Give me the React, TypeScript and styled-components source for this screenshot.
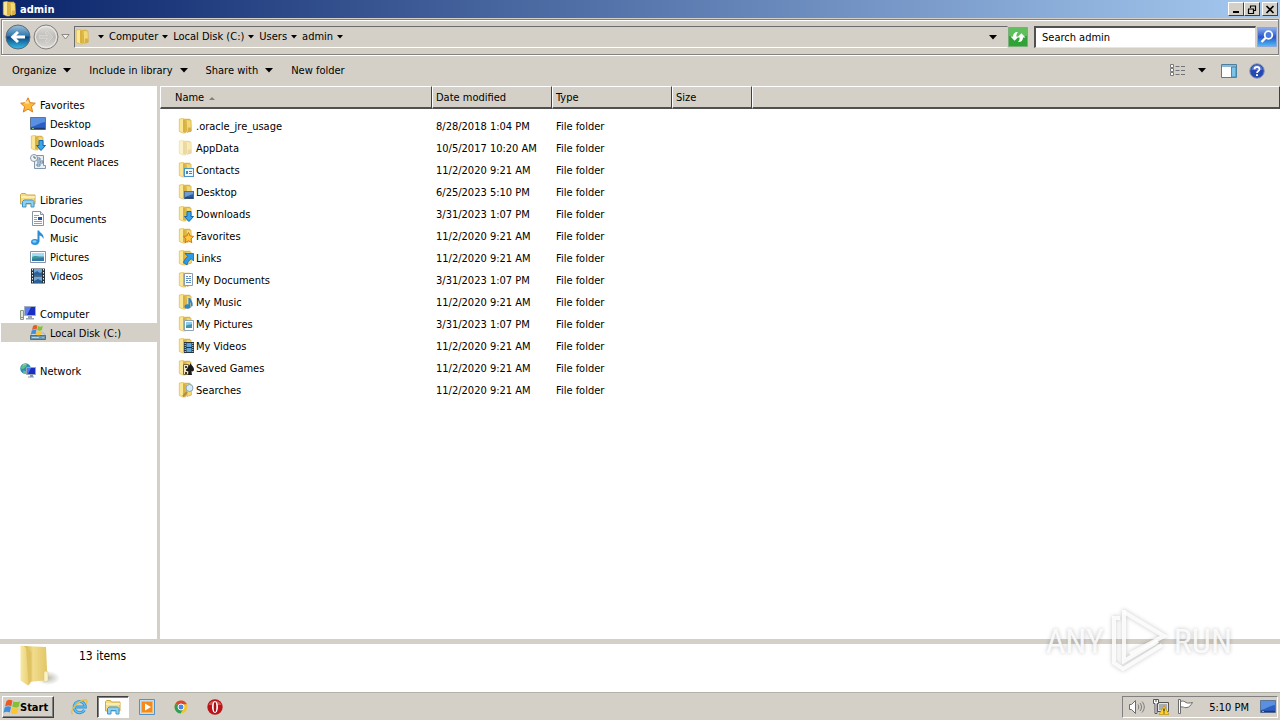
import React from "react";
import styled, { createGlobalStyle, css } from "styled-components";

const face = "#d4d0c8";
const uiFont = `"DejaVu Sans Condensed", "DejaVu Sans", "Noto Sans", sans-serif`;

const GlobalStyle = createGlobalStyle`
  *, *::before, *::after { box-sizing: border-box; }
  body {
    margin: 0;
    background: ${face};
    color: #000;
    font-family: ${uiFont};
    font-size: 11px;
    line-height: 16px;
  }
  button, input { font: inherit; color: inherit; }
  button { cursor: pointer; }
  svg { display: block; flex: none; }
`;

/* ---------- layout ---------- */

const Desktop = styled.div`
  display: flex;
  flex-direction: column;
  min-height: 100vh;
  position: relative;
`;

const TitleBar = styled.header`
  display: flex;
  align-items: center;
  height: 18px;
  padding: 0 2px;
  background: linear-gradient(90deg, #0a246a, #a6caf0);
`;

const WindowTitle = styled.h1`
  flex: 1;
  margin: 0 0 0 2px;
  padding-top: 2px;
  color: #fff;
  font-size: 11px;
  line-height: 16px;
`;

const CaptionButton = styled.button<{ $gap?: boolean }>`
  display: grid;
  place-items: center;
  width: 16px;
  height: 14px;
  margin-left: ${(p) => (p.$gap ? 2 : 0)}px;
  padding: 0;
  background: ${face};
  border: 1px solid;
  border-color: #fff #404040 #404040 #fff;
`;

const NavBar = styled.div`
  display: flex;
  align-items: center;
  height: 36px;
  margin: 1px 1px 0;
  padding: 0 1px 0 3px;
  border: 1px solid #808080;
  box-shadow: inset 1px 1px 0 #fff, 0 1px 0 #fff;
`;

const PlainButton = styled.button`
  display: flex;
  align-items: center;
  padding: 0;
  background: none;
  border: 0;
  white-space: nowrap;
`;

const TravelButtons = styled.div`
  display: flex;
  align-items: center;
  gap: 2px;
  width: 69px;
`;

const AddressBar = styled.div`
  flex: 1;
  display: flex;
  align-items: center;
  height: 22px;
  border: 1px solid;
  border-color: #6b6b6b #d4d0c8 #fff #6b6b6b;
  min-width: 0;
`;

const Crumbs = styled.ol`
  flex: 1;
  display: flex;
  align-items: center;
  margin: 0;
  padding: 0 0 0 7px;
  list-style: none;
`;

const Crumb = styled(PlainButton)`
  gap: 4px;
  height: 18px;
  padding-right: 5px;
`;

const AddressMenu = styled(PlainButton)`
  padding: 6px 10px;
`;

const SearchBox = styled.div`
  display: flex;
  align-items: center;
  gap: 1px;
  width: 243px;
  margin-left: 6px;
`;

const SearchInput = styled.input`
  flex: 1;
  min-width: 0;
  height: 22px;
  padding: 0 6px;
  background: #fff;
  border: 1px solid;
  border-width: 2px 1px 1px 2px;
  border-color: #505050 #d4d0c8 #e8e6e0 #505050;
  outline: none;
`;

const CommandBar = styled.div`
  display: flex;
  align-items: center;
  gap: 18px;
  height: 31px;
  padding: 0 15px 0 12px;
`;

const Command = styled(PlainButton)`
  gap: 7px;
`;

const ViewTools = styled.div`
  display: flex;
  align-items: center;
  gap: 12px;
  margin-left: auto;
`;

const ViewMenu = styled(PlainButton)`
  padding-right: 3px;
`;

const Body = styled.div`
  flex: 1;
  display: flex;
`;

const Sidebar = styled.nav`
  width: 160px;
  flex: none;
  padding: 9px 0 0 1px;
  background: #fff;
  border-right: 3px solid ${face};
`;

const TreeGroup = styled.ul`
  margin: 0 0 19px;
  padding: 0;
  list-style: none;
`;

const TreeLink = styled.a<{ $child?: boolean; $selected?: boolean }>`
  display: flex;
  align-items: center;
  gap: 4px;
  height: 19px;
  padding-left: ${(p) => (p.$child ? 29 : 19)}px;
  color: #000;
  text-decoration: none;
  white-space: nowrap;
  ${(p) =>
    p.$selected &&
    css`
      background: ${face};
    `}
`;

const Label = styled.span`
  padding-top: 2px;
`;

const Files = styled.main`
  flex: 1;
  min-width: 0;
  background: #fff;
`;

const FileTable = styled.table`
  width: 100%;
  table-layout: fixed;
  border-collapse: separate;
  border-spacing: 0;
`;

const HeadCell = styled.th<{ $width?: number; $indent?: boolean }>`
  width: ${(p) => (p.$width ? `${p.$width}px` : "auto")};
  height: 23px;
  padding: 2px 0 0 ${(p) => (p.$indent ? 14 : 3)}px;
  background: ${face};
  border: 1px solid;
  border-width: 1px 1px 2px 1px;
  border-color: #fff #404040 #505050 #fff;
  font-weight: normal;
  text-align: left;
`;

const SortButton = styled(PlainButton)`
  gap: 5px;
`;

const Cell = styled.td`
  height: 22px;
  padding: 2px 0 0 4px;
  white-space: nowrap;
`;

const NameCell = styled(Cell)`
  padding-top: 0;
`;

const Spacer = styled.tbody`
  td {
    height: 6px;
    padding: 0;
  }
`;

const FileName = styled.div<{ $hidden?: boolean }>`
  display: flex;
  align-items: center;
  gap: 2px;
  padding-left: 14px;
  svg {
    opacity: ${(p) => (p.$hidden ? 0.5 : 1)};
  }
`;

const Details = styled.footer`
  display: flex;
  height: 53px;
  padding-left: 16px;
  gap: 19px;
  background: #fff;
  border-top: 5px solid ${face};
  font-size: 12px;
  p {
    margin: 4px 0 0;
  }
`;

const Taskbar = styled.div`
  display: flex;
  align-items: center;
  height: 28px;
  padding: 2px 2px 0;
  background: ${face};
  box-shadow: inset 0 1px 0 #b4b4aa;
`;

const StartButton = styled.button`
  display: flex;
  align-items: center;
  width: 52px;
  height: 22px;
  padding: 0 1px 0 0;
  background: ${face};
  border: 1px solid;
  border-color: #fff #404040 #404040 #fff;
  box-shadow: inset -1px -1px 0 #808080;
  font-weight: bold;
`;

const Pinned = styled.div`
  display: flex;
  gap: 2px;
  margin-left: 9px;
`;

const PinnedButton = styled.button<{ $active?: boolean }>`
  display: grid;
  place-items: center;
  width: 32px;
  height: 22px;
  padding: 0;
  background: ${(p) => (p.$active ? "#fff" : "none")};
  border: 1px solid transparent;
  ${(p) =>
    p.$active &&
    css`
      border-color: #404040 #fff #fff #404040;
      box-shadow: inset 1px 1px 0 #808080;
    `}
`;

const Tray = styled.div`
  display: flex;
  align-items: center;
  gap: 8px;
  height: 22px;
  margin-left: auto;
  padding: 0 1px 0 6px;
  border: 1px solid;
  border-color: #808080 #fff #fff #808080;
`;

const Clock = styled.time`
  margin: 0 3px 0 8px;
  padding-top: 2px;
`;

const Watermark = styled.div`
  position: absolute;
  right: 48px;
  bottom: 47px;
  display: flex;
  align-items: center;
  gap: 6px;
  color: rgba(255, 255, 255, 0.85);
  font-family: "Liberation Sans Narrow", "Roboto Condensed", "Open Sans Condensed",
    "Noto Sans ExtraCondensed", "DejaVu Sans Condensed", sans-serif;
  font-size: 34px;
  line-height: 64px;
  text-shadow: 0 0 4px rgba(0, 0, 0, 0.25);
  pointer-events: none;
  svg {
    filter: drop-shadow(0 0 2px rgba(0, 0, 0, 0.25));
  }
`;

/* ---------- icons ---------- */

const Arrow = ({ small }: { small?: boolean }) =>
  small ? (
    <svg width="6" height="4" viewBox="0 0 6 4" aria-hidden>
      <path d="M0 0h6L3 3.500z" fill="#000" />
    </svg>
  ) : (
    <svg width="8" height="5" viewBox="0 0 8 5" aria-hidden>
      <path d="M0 0h8L4 4.500z" fill="#000" />
    </svg>
  );

type Kind =
  | "contacts"
  | "desktop"
  | "downloads"
  | "favorites"
  | "links"
  | "documents"
  | "music"
  | "pictures"
  | "videos"
  | "games"
  | "searches";

const overlays: Record<Kind, React.ReactNode> = {
  contacts: (
    <>
      <rect x="6.500" y="6.500" width="9" height="8" fill="#eef7fd" stroke="#4d92c4" />
      <path d="M8 9h2v3H8z" fill="#3b86c4" />
      <path d="M11 9.500h3M11 11.500h3" stroke="#3b86c4" />
    </>
  ),
  desktop: (
    <>
      <rect x="6.500" y="7.500" width="9" height="7" fill="#2a5fa4" stroke="#54708c" />
      <path d="M7 8h8v2L7 13z" fill="#6f9cd0" />
      <path d="M7 14h8" stroke="#14315c" />
    </>
  ),
  downloads: (
    <path d="M9 5.500h4v5h2.500L11 15.500 6.500 10.500H9z" fill="#3aa5ea" stroke="#1668ae" />
  ),
  favorites: (
    <path
      d="M10.500 4.500l1.600 3.500 3.500.4-2.600 2.500.8 3.800-3.300-2-3.300 2 .8-3.800L5.400 8.400l3.500-.4z"
      fill="#ffc93c"
      stroke="#d9741a"
    />
  ),
  links: (
    <path d="M7 3.500h8.500V11l-2.300-2.300C11 10.500 9.500 12 9 15L5.500 12.500c1-3 2.500-4.500 4.200-6.200z" fill="#2f9be6" stroke="#1763ad" strokeWidth=".8" />
  ),
  documents: (
    <>
      <path d="M6.500 1.500h8v12h-8z" fill="#fff" stroke="#8f9dab" />
      <path d="M8 4.500h2M11 4.500h2M8 6.500h5M8 8.500h2M11 8.500h2M8 10.500h5" stroke="#5d8fc2" />
    </>
  ),
  music: (
    <>
      <ellipse cx="9.500" cy="12.500" rx="3" ry="2.200" fill="#2a87cf" />
      <path d="M11.300 12.500V4c.3 2.500 3.500 3.500 2.500 8" fill="none" stroke="#2a87cf" strokeWidth="1.800" />
    </>
  ),
  pictures: (
    <>
      <path d="M6.500 4.500h9v10h-9z" fill="#fff" stroke="#8fa3b3" />
      <path d="M8 6h6v4H8z" fill="#8ccbee" />
      <path d="M8 9.500l6-1.500v4H8z" fill="#3d97a6" />
    </>
  ),
  videos: (
    <>
      <path d="M6 4h10v11H6z" fill="#26343f" />
      <path d="M8.500 5h5v4h-5zM8.500 10h5v4h-5z" fill="#5fa5d8" />
      <path d="M7.200 5v10M14.800 5v10" stroke="#dfe6ea" strokeDasharray="1 1" />
    </>
  ),
  games: (
    <>
      <path d="M5.500 4.500h5v10h-5z" fill="#efe7c8" stroke="#77693b" />
      <path d="M7 6h2v2H7zM8 9h2v2H8zM7 12h2v2H7z" fill="#3d3a30" />
      <path d="M12.500 3c.5 2.500 3.500 3.500 3.500 6.500 0 2-2 2.500-2.700 1.500l.7 4h-4l1.200-4c-1.200 1-2.700 0-2.200-2C9.500 6.500 12 5.500 12.500 3z" fill="#1a1a1a" />
    </>
  ),
  searches: (
    <>
      <path d="M9 10l-4 4.500" stroke="#b08d4c" strokeWidth="2" />
      <circle cx="11.500" cy="6" r="3.500" fill="#d4ecf8" stroke="#8aa4b4" />
    </>
  ),
};

const FolderIcon = ({ kind }: { kind?: Kind }) => (
  <svg width="16" height="16" viewBox="0 0 16 16" aria-hidden>
    <path d="M5 .8h7l.5 13H6z" fill="#dcb84e" />
    <path d="M8 1.500l5 .5.500 11-4.500 1.500z" fill="#f3d974" stroke="#cfa640" strokeWidth=".6" />
    <path d="M1.300 1L5 .5 7.700 2.500v12.500L5 15l-3.700-1.500z" fill="#f9e795" stroke="#d6b048" strokeWidth=".6" />
    <path d="M5 1l2.700 1.500V14.700L5 14z" fill="#d9b23e" />
    {!kind && <path d="M10 9.500h3v4.500h-3z" fill="#d8b04a" />}
    {kind && overlays[kind]}
  </svg>
);

const BigFolder = () => (
  <svg width="44" height="46" viewBox="0 0 44 46" aria-hidden>
    <defs>
      <linearGradient id="bf1" x1="0" x2="1">
        <stop offset="0" stopColor="#f7e8a4" />
        <stop offset="1" stopColor="#e6cb6c" />
      </linearGradient>
      <linearGradient id="bf2" x1="0" x2="1">
        <stop offset="0" stopColor="#d2b04a" />
        <stop offset=".4" stopColor="#f0dc8c" />
        <stop offset="1" stopColor="#e2c566" />
      </linearGradient>
      <radialGradient id="bf3">
        <stop offset="0" stopColor="#8c8c84" stopOpacity=".6" />
        <stop offset="1" stopColor="#8c8c84" stopOpacity="0" />
      </radialGradient>
    </defs>
    <ellipse cx="32" cy="34" rx="12" ry="7" fill="url(#bf3)" />
    <path d="M8 2l22 1 1.500 33-18 2z" fill="url(#bf2)" />
    <path d="M28 28l2-1 2 1v9l-4 1z" fill="#fbf3c8" stroke="#d9c069" strokeWidth=".5" />
    <path d="M4.500 1.500L8 2l6.500 6v30L12 41.500l-7.500-5z" fill="url(#bf1)" />
    <path d="M10 3l5.500 5v29l-3 4.500z" fill="#dfc363" />
  </svg>
);

const StarIcon = () => (
  <svg width="16" height="16" viewBox="0 0 16 16" aria-hidden>
    <path
      d="M8 .8l2.100 4.900 5.200.5-3.900 3.500 1.300 5.300L8 12.100 3.300 15l1.300-5.300L.7 6.200l5.200-.5z"
      fill="#fdb93a"
      stroke="#e07d1c"
    />
    <path d="M8 3l1.200 3.500H4z" fill="#ffe9a0" />
  </svg>
);

const DesktopIcon = () => (
  <svg width="16" height="16" viewBox="0 0 16 16" aria-hidden>
    <path d="M.5 1.500h15v12H.5z" fill="#2c5fc4" stroke="#5d7696" />
    <path d="M1 2h14v4C9 7 6 10 1 11z" fill="#5a90e2" />
    <path d="M1 12.500h14" stroke="#203a6c" strokeWidth="1.500" />
    <path d="M2 12.500h2" stroke="#7cc06c" />
  </svg>
);

const RecentIcon = () => (
  <svg width="16" height="16" viewBox="0 0 16 16" aria-hidden>
    <path d="M4.500 1.500h9v10h2v3h-11z" fill="#e8f0f5" stroke="#7f98ab" />
    <path d="M7 4h3v2H7zM10 7h3v2h-3zM7 10h3v2H7zM8 7v2" fill="#fff" stroke="#5c7f9b" />
    <circle cx="4" cy="4" r="3.500" fill="#eff4f7" stroke="#8899a6" />
    <path d="M4 2v2h2" fill="none" stroke="#556b7a" />
  </svg>
);

const LibraryIcon = () => (
  <svg width="16" height="16" viewBox="0 0 16 16" aria-hidden>
    <path d="M.5 2.500l1-1h4l1 1.500h8.500v9H.5z" fill="#f2dc84" stroke="#cdaa48" />
    <path d="M1 5h14" stroke="#fff3bf" strokeWidth="1.500" />
    <path d="M2.500 15V9.500L4 8h8.500L14 9.500V15h-3v-3.500H6V15z" fill="#8fd0f2" stroke="#3f96cb" />
  </svg>
);

const DocumentIcon = () => (
  <svg width="16" height="16" viewBox="0 0 16 16" aria-hidden>
    <path d="M2.500.5h8l3 3v11h-11z" fill="#fff" stroke="#8595a5" />
    <path d="M10.500.5v3h3" fill="#dde6ee" stroke="#8595a5" />
    <path d="M4 4.500h5M4 6.500h3M4 8.500h3M4 10.500h8M4 12.500h8" stroke="#7fa3c6" />
    <path d="M8 6h4v3H8z" fill="#23509a" />
  </svg>
);

const MusicIcon = () => (
  <svg width="16" height="16" viewBox="0 0 16 16" aria-hidden>
    <ellipse cx="5" cy="12" rx="4" ry="3" fill="#2a92dc" />
    <ellipse cx="4.500" cy="11.500" rx="2" ry="1.200" fill="#8bd0f6" />
    <path d="M7.500 12V.5h1.700c.5 2.500 5.300 3.500 4.300 8.500-1-2.500-2.500-3.300-4-3.600V12z" fill="#2a8dd2" />
  </svg>
);

const PictureIcon = () => (
  <svg width="16" height="16" viewBox="0 0 16 16" aria-hidden>
    <path d="M.5 2.500h15v11H.5z" fill="#fff" stroke="#8096a8" />
    <path d="M2 4h12v4H2z" fill="#a5daf5" />
    <path d="M2 8c3-2 5 0 12-.5V12H2z" fill="#3c9a98" />
    <path d="M2 10l12-1v3H2z" fill="#3574ac" />
  </svg>
);

const VideoIcon = () => (
  <svg width="16" height="16" viewBox="0 0 16 16" aria-hidden>
    <path d="M1 .5h14v15H1z" fill="#27323c" />
    <path d="M4 1h8v6.500H4zM4 8.500h8V15H4z" fill="#6ea8d8" />
    <path d="M4 5l3-2 3 2 2-1v3.500H4zM4 13l4-2 4 2v2H4z" fill="#2f5f96" />
    <path d="M2.500 1v14M13.500 1v14" stroke="#eef2f5" strokeDasharray="1.500 1.500" />
  </svg>
);

const ComputerIcon = () => (
  <svg width="16" height="16" viewBox="0 0 16 16" aria-hidden>
    <path d="M.5 4.500h3v9h-3z" fill="#dfe5d8" stroke="#8a9a80" />
    <path d="M1 11.500h2" stroke="#5bbf3d" />
    <path d="M4.500.5h11v9h-11z" fill="#1a2fc2" stroke="#a4b0be" />
    <path d="M5 1h6L7 9H5z" fill="#5a7cf0" />
    <path d="M8 10h4v2H8zM6 12h8v1.500H6z" fill="#9aa6b2" />
  </svg>
);

const WinFlag = () => (
  <>
    <path d="M1.500 2C3.500.5 5.500.5 7.500 1.700L6.300 7.200C4.500 6.200 2.200 6.200 0 7.500z" fill="#ea5a26" />
    <path d="M8.400 2.200c2 1.200 4.200 1.200 6.600 0l-1.300 5.500c-2 1.200-4.500 1-6.500 0z" fill="#83c03a" />
    <path d="M-.3 8.500C2 7 4.300 7 6.100 8l-1.300 5.500c-2-1-4.300-1-6.300.2z" fill="#3f8fdc" />
    <path d="M7 8.500c2 1.200 4.300 1.200 6.500 0l-1.300 5.700c-2 1.200-4.400 1-6.400 0z" fill="#fbc62f" />
  </>
);

const DiskIcon = () => (
  <svg width="16" height="16" viewBox="0 0 16 16" aria-hidden>
    <path d="M2 8h12l1.500 3H.5z" fill="#cdd6dc" stroke="#8a99a5" strokeWidth=".5" />
    <path d="M.5 10.500h15v4H.5z" fill="#6d97ad" stroke="#51707f" />
    <path d="M2 12.500h7" stroke="#b8d6e2" />
    <path d="M12 12.500h2" stroke="#7be04f" />
    <g transform="translate(2 -.5) scale(.72)">
      <WinFlag />
    </g>
  </svg>
);

const NetworkIcon = () => (
  <svg width="16" height="16" viewBox="0 0 16 16" aria-hidden>
    <circle cx="5.500" cy="5.500" r="5.300" fill="#2d8fb0" />
    <path d="M3 1.500c3-2 5 0 3 2s-3 3-5 2c0-2 1-3 2-4zM3.500 7.500l3 1-1 2.300c-2-.3-3-1.300-2-3.300z" fill="#5fc08a" />
    <path d="M3 2.500c1-1 2-1.500 3-1" stroke="#c5ecf5" />
    <path d="M6.500 4.500h9v7h-9z" fill="#1a2fc2" stroke="#9aa6b8" />
    <path d="M7 5h4l-3 6H7z" fill="#4f74ee" />
    <path d="M10 12h3v1.500h-3zM8 13.500h6v1H8z" fill="#8a96a4" />
  </svg>
);

const BackIcon = () => (
  <svg width="26" height="26" viewBox="0 0 26 26" aria-hidden>
    <defs>
      <linearGradient id="bk" x1="0" x2="0" y1="0" y2="1">
        <stop offset="0" stopColor="#9fc0d8" />
        <stop offset=".45" stopColor="#2f79b0" />
        <stop offset=".5" stopColor="#0b4680" />
        <stop offset="1" stopColor="#35c0ee" />
      </linearGradient>
    </defs>
    <circle cx="13" cy="13" r="12" fill="url(#bk)" stroke="#5a6a78" />
    <path d="M5.500 13l6.500-6 2 2-2.700 2.500H20v3h-8.700L14 17l-2 2z" fill="#fff" />
  </svg>
);

const ForwardIcon = () => (
  <svg width="26" height="26" viewBox="0 0 26 26" aria-hidden>
    <defs>
      <linearGradient id="fw" x1="0" x2="0" y1="0" y2="1">
        <stop offset="0" stopColor="#e2e0dc" />
        <stop offset=".5" stopColor="#bdbbb7" />
        <stop offset="1" stopColor="#dedcd8" />
      </linearGradient>
    </defs>
    <circle cx="13" cy="13" r="12" fill="url(#fw)" stroke="#84827e" />
    <circle cx="13" cy="13" r="10.500" fill="none" stroke="#eeece8" />
    <path d="M20 13l-6-6-2 2 2.500 2.500H6v3h8.500L12 17l2 2z" fill="#cbc9c5" stroke="#dddbd7" strokeWidth=".6" />
  </svg>
);

const RecentArrow = () => (
  <svg width="9" height="6" viewBox="0 0 9 6" aria-hidden>
    <path d="M.8.500h7.400L4.500 5z" fill="#f4f2ee" stroke="#8c8a86" />
  </svg>
);

const RefreshIcon = () => (
  <svg width="20" height="20" viewBox="0 0 20 20" aria-hidden>
    <path d="M.5.5h19v19H.5z" fill="#2fa336" stroke="#7cae7c" />
    <path d="M1 1h18v8H1z" fill="#5fbf5c" />
    <path d="M2.500 9.500h2.400C5.200 6 7.500 4.500 10 5 8.700 6.200 8.400 7.500 8.400 9.500h2.300L6.600 13.800z" fill="#fff" />
    <path d="M17.500 10.500h-2.400c-.3 3.500-2.600 5-5.100 4.500 1.300-1.200 1.600-2.500 1.600-4.500H9.300l4.100-4.300z" fill="#fff" />
  </svg>
);

const SearchIcon = () => (
  <svg width="20" height="20" viewBox="0 0 20 20" aria-hidden>
    <defs>
      <linearGradient id="se" x1="0" x2="0" y1="0" y2="1">
        <stop offset="0" stopColor="#8fb0ee" />
        <stop offset=".5" stopColor="#2a55cc" />
        <stop offset="1" stopColor="#4fc0f4" />
      </linearGradient>
    </defs>
    <path d="M.5.5h19v19H.5z" fill="url(#se)" stroke="#8ea6d8" />
    <circle cx="11.500" cy="8" r="3.800" fill="#4c7be0" stroke="#fff" strokeWidth="1.800" />
    <path d="M8.500 11L4.500 15" stroke="#fff" strokeWidth="2.400" />
  </svg>
);

const ListViewIcon = () => (
  <svg width="16" height="14" viewBox="0 0 16 14" aria-hidden>
    <path d="M.5.500h3v3h-3zM.5 4.500h3v3h-3zM.5 8.500h3v3h-3z" fill="#fff" stroke="#7a7a7a" />
    <path d="M5.500 2.500h4M11 2.500h4M5.500 6.500h4M11 6.500h4M5.500 10.500h4M11 10.500h4" stroke="#707478" />
  </svg>
);

const PreviewIcon = () => (
  <svg width="16" height="14" viewBox="0 0 16 14" aria-hidden>
    <path d="M.5.500h15v13H.5z" fill="#fff" stroke="#4d7f9f" />
    <path d="M1 2h14" stroke="#8db9d4" strokeWidth="2" />
    <path d="M10.500 3h4.500v10h-4.500z" fill="#7cc3ea" stroke="#4d88aa" />
  </svg>
);

const HelpIcon = () => (
  <svg width="16" height="16" viewBox="0 0 16 16" aria-hidden>
    <circle cx="8" cy="8" r="7.300" fill="#2748b0" stroke="#8c9cba" />
    <path d="M2.500 7a5.500 5 0 0 1 11 0z" fill="#5577cc" />
    <path d="M5.500 6.200c0-3.200 5-3.200 5 0C10.500 8 8 8 8 10" fill="none" stroke="#fff" strokeWidth="1.700" />
    <path d="M7 11.300h2v1.800H7z" fill="#fff" />
  </svg>
);

const IeIcon = () => (
  <svg width="18" height="18" viewBox="0 0 18 18" aria-hidden>
    <path d="M14.500 12a5.600 5.600 0 1 1 .8-3H5" fill="none" stroke="#2f95d8" strokeWidth="3" />
    <path d="M14.500 12a5.600 5.600 0 1 1 .8-3H5" fill="none" stroke="#6cc6f2" strokeWidth="1.200" />
    <path d="M2.500 16.300C-1.500 14 8 2 15.500 1.700c2 .3 1.500 2.800.5 4.300" fill="none" stroke="#e8bf45" strokeWidth="1.400" />
  </svg>
);

const PlayerIcon = () => (
  <svg width="16" height="16" viewBox="0 0 16 16" aria-hidden>
    <path d="M.5.500h15v15H.5z" fill="#c4dff3" stroke="#4f93c8" />
    <path d="M2.500 2.500h11v11h-11z" fill="#f38b1c" stroke="#f8b566" />
    <path d="M6 4.500l6 3.500-6 3.500z" fill="#fff" />
  </svg>
);

const ChromeIcon = () => (
  <svg width="14" height="14" viewBox="0 0 14 14" aria-hidden>
    <circle cx="7" cy="7" r="6.500" fill="#f4c531" />
    <path d="M7 7L1.400 3.700A6.500 6.500 0 0 1 12.900 4.200H7z" fill="#dc4437" />
    <path d="M1.400 3.700A6.500 6.500 0 0 0 6.500 13.500L9.500 8.500 7 7z" fill="#2f9e55" />
    <circle cx="7" cy="7" r="3" fill="#4a86e8" stroke="#fff" />
  </svg>
);

const OperaIcon = () => (
  <svg width="16" height="16" viewBox="0 0 16 16" aria-hidden>
    <circle cx="8" cy="8" r="7.700" fill="#b8141a" />
    <path d="M1.500 6a6.800 5.500 0 0 1 13 0z" fill="#d85452" />
    <ellipse cx="8" cy="8" rx="3" ry="6" fill="#fff" />
    <ellipse cx="8" cy="8" rx="1.300" ry="5" fill="#a81016" />
  </svg>
);

const VolumeIcon = () => (
  <svg width="16" height="16" viewBox="0 0 16 16" aria-hidden>
    <path d="M.5 5.500h2l4-4v13l-4-4h-2z" fill="#fff" stroke="#6c6c6c" />
    <path d="M9 5.500c1 1.500 1 3.500 0 5M11 4c2 2.500 2 5.500 0 8M13 2.500c3 3.500 3 7.500 0 11" fill="none" stroke="#7a7a7a" />
  </svg>
);

const NetTrayIcon = () => (
  <svg width="16" height="16" viewBox="0 0 16 16" aria-hidden>
    <path d="M4.500 3.500h11v9h-11z" fill="#e4e4e4" stroke="#555" />
    <path d="M6 5h8v6H6z" fill="#a9adb2" />
    <path d="M.5.500h5v4h-1.500v10h-2v-10H.5z" fill="#fff" stroke="#555" />
    <path d="M3 0v3" stroke="#555" />
    <path d="M11 6.500l5 9H6z" fill="#ffd42a" stroke="#b58a00" strokeWidth=".6" />
    <path d="M11 9.500v3M11 13.500v1" stroke="#222" strokeWidth="1.200" />
  </svg>
);

const FlagIcon = () => (
  <svg width="16" height="16" viewBox="0 0 16 16" aria-hidden>
    <path d="M1.500.5h2v14h-2z" fill="#fff" stroke="#6c6c6c" />
    <path d="M3.500 2.500c3-1 4 0 5.500 1s4 .5 6.500 0c-2 3-3 5-6.500 5.200-2 0-3-1.200-5.500-.7z" fill="#fff" stroke="#6c6c6c" />
  </svg>
);

const PlayMark = () => (
  <svg width="58" height="64" viewBox="0 0 58 64" aria-hidden>
    <g fill="none" stroke="rgba(255,255,255,.85)" strokeWidth="4">
      <path d="M14 3l40 24-34 18" />
      <path d="M14 1v51l34-20" />
      <path d="M10 9H4v45l9 6 39-24" />
    </g>
  </svg>
);

/* ---------- data ---------- */

const crumbs = ["Computer", "Local Disk (C:)", "Users", "admin"];

const tree: { label: string; icon: React.ReactNode; selected?: boolean }[][] = [
  [
    { label: "Favorites", icon: <StarIcon /> },
    { label: "Desktop", icon: <DesktopIcon /> },
    { label: "Downloads", icon: <FolderIcon kind="downloads" /> },
    { label: "Recent Places", icon: <RecentIcon /> },
  ],
  [
    { label: "Libraries", icon: <LibraryIcon /> },
    { label: "Documents", icon: <DocumentIcon /> },
    { label: "Music", icon: <MusicIcon /> },
    { label: "Pictures", icon: <PictureIcon /> },
    { label: "Videos", icon: <VideoIcon /> },
  ],
  [
    { label: "Computer", icon: <ComputerIcon /> },
    { label: "Local Disk (C:)", icon: <DiskIcon />, selected: true },
  ],
  [{ label: "Network", icon: <NetworkIcon /> }],
];

const files: { name: string; date: string; kind?: Kind; hidden?: boolean }[] = [
  { name: ".oracle_jre_usage", date: "8/28/2018 1:04 PM" },
  { name: "AppData", date: "10/5/2017 10:20 AM", hidden: true },
  { name: "Contacts", date: "11/2/2020 9:21 AM", kind: "contacts" },
  { name: "Desktop", date: "6/25/2023 5:10 PM", kind: "desktop" },
  { name: "Downloads", date: "3/31/2023 1:07 PM", kind: "downloads" },
  { name: "Favorites", date: "11/2/2020 9:21 AM", kind: "favorites" },
  { name: "Links", date: "11/2/2020 9:21 AM", kind: "links" },
  { name: "My Documents", date: "3/31/2023 1:07 PM", kind: "documents" },
  { name: "My Music", date: "11/2/2020 9:21 AM", kind: "music" },
  { name: "My Pictures", date: "3/31/2023 1:07 PM", kind: "pictures" },
  { name: "My Videos", date: "11/2/2020 9:21 AM", kind: "videos" },
  { name: "Saved Games", date: "11/2/2020 9:21 AM", kind: "games" },
  { name: "Searches", date: "11/2/2020 9:21 AM", kind: "searches" },
];

export default function App() {
  return (
    <>
      <GlobalStyle />
      <Desktop>
        <TitleBar>
          <FolderIcon />
          <WindowTitle>admin</WindowTitle>
          <CaptionButton aria-label="Minimize">
            <svg width="10" height="9" viewBox="0 0 10 9">
              <path d="M2 7h6" stroke="#000" strokeWidth="2" />
            </svg>
          </CaptionButton>
          <CaptionButton aria-label="Restore">
            <svg width="10" height="9" viewBox="0 0 10 9">
              <path d="M3 1h6M3.500 1v2M8.500 1v5M6 5.500h3M1 4h6M1.500 4v5M6.500 4v5M1 8.500h6" stroke="#000" strokeWidth="1.200" />
            </svg>
          </CaptionButton>
          <CaptionButton aria-label="Close" $gap>
            <svg width="10" height="9" viewBox="0 0 10 9">
              <path d="M1.500 1l7 7M8.500 1l-7 7" stroke="#000" strokeWidth="1.700" />
            </svg>
          </CaptionButton>
        </TitleBar>

        <NavBar>
          <TravelButtons>
            <PlainButton aria-label="Back">
              <BackIcon />
            </PlainButton>
            <PlainButton aria-label="Forward">
              <ForwardIcon />
            </PlainButton>
            <PlainButton aria-label="Recent pages">
              <RecentArrow />
            </PlainButton>
          </TravelButtons>
          <AddressBar>
            <FolderIcon />
            <Crumbs>
              <li>
                <Crumb aria-label="Locations">
                  <Arrow small />
                </Crumb>
              </li>
              {crumbs.map((c) => (
                <li key={c}>
                  <Crumb>
                    {c}
                    <Arrow small />
                  </Crumb>
                </li>
              ))}
            </Crumbs>
            <AddressMenu aria-label="Previous locations">
              <Arrow />
            </AddressMenu>
          </AddressBar>
          <PlainButton aria-label="Refresh">
            <RefreshIcon />
          </PlainButton>
          <SearchBox>
            <SearchInput aria-label="Search admin" defaultValue="Search admin" />
            <PlainButton aria-label="Search">
              <SearchIcon />
            </PlainButton>
          </SearchBox>
        </NavBar>

        <CommandBar>
          <Command>
            Organize <Arrow />
          </Command>
          <Command>
            Include in library <Arrow />
          </Command>
          <Command>
            Share with <Arrow />
          </Command>
          <Command>New folder</Command>
          <ViewTools>
            <PlainButton aria-label="Change view">
              <ListViewIcon />
            </PlainButton>
            <ViewMenu aria-label="More view options">
              <Arrow />
            </ViewMenu>
            <PlainButton aria-label="Preview pane">
              <PreviewIcon />
            </PlainButton>
            <PlainButton aria-label="Help">
              <HelpIcon />
            </PlainButton>
          </ViewTools>
        </CommandBar>

        <Body>
          <Sidebar aria-label="Folders">
            {tree.map((group) => (
              <TreeGroup key={group[0].label}>
                {group.map((item, i) => (
                  <li key={item.label}>
                    <TreeLink href="#" $child={i > 0} $selected={item.selected}>
                      {item.icon}
                      <Label>{item.label}</Label>
                    </TreeLink>
                  </li>
                ))}
              </TreeGroup>
            ))}
          </Sidebar>
          <Files>
            <FileTable>
              <thead>
                <tr>
                  <HeadCell $width={272} $indent>
                    <SortButton>
                      Name
                      <svg width="6" height="3" viewBox="0 0 6 3" aria-hidden>
                        <path d="M3 0l3 3H0z" fill="#808080" />
                      </svg>
                    </SortButton>
                  </HeadCell>
                  <HeadCell $width={120}>Date modified</HeadCell>
                  <HeadCell $width={120}>Type</HeadCell>
                  <HeadCell $width={80}>Size</HeadCell>
                  <HeadCell aria-label="Empty column" />
                </tr>
              </thead>
              <Spacer>
                <tr>
                  <td colSpan={5} />
                </tr>
              </Spacer>
              <tbody>
                {files.map((f) => (
                  <tr key={f.name}>
                    <NameCell>
                      <FileName $hidden={f.hidden}>
                        <FolderIcon kind={f.kind} />
                        <Label>{f.name}</Label>
                      </FileName>
                    </NameCell>
                    <Cell>{f.date}</Cell>
                    <Cell>File folder</Cell>
                    <Cell />
                    <Cell />
                  </tr>
                ))}
              </tbody>
            </FileTable>
          </Files>
        </Body>

        <Details>
          <BigFolder />
          <p>13 items</p>
        </Details>

        <Taskbar>
          <StartButton>
            <svg width="17" height="16" viewBox="-2 0 17 16" aria-hidden>
              <WinFlag />
            </svg>
            <Label>Start</Label>
          </StartButton>
          <Pinned>
            <PinnedButton aria-label="Internet Explorer">
              <IeIcon />
            </PinnedButton>
            <PinnedButton aria-label="Windows Explorer" $active>
              <LibraryIcon />
            </PinnedButton>
            <PinnedButton aria-label="Media Player">
              <PlayerIcon />
            </PinnedButton>
            <PinnedButton aria-label="Chrome">
              <ChromeIcon />
            </PinnedButton>
            <PinnedButton aria-label="Opera">
              <OperaIcon />
            </PinnedButton>
          </Pinned>
          <Tray>
            <VolumeIcon />
            <NetTrayIcon />
            <FlagIcon />
            <Clock>5:10 PM</Clock>
            <PlainButton aria-label="Show desktop">
              <DesktopIcon />
            </PlainButton>
          </Tray>
        </Taskbar>

        <Watermark>
          <span>ANY</span>
          <PlayMark />
          <span>RUN</span>
        </Watermark>
      </Desktop>
    </>
  );
}
